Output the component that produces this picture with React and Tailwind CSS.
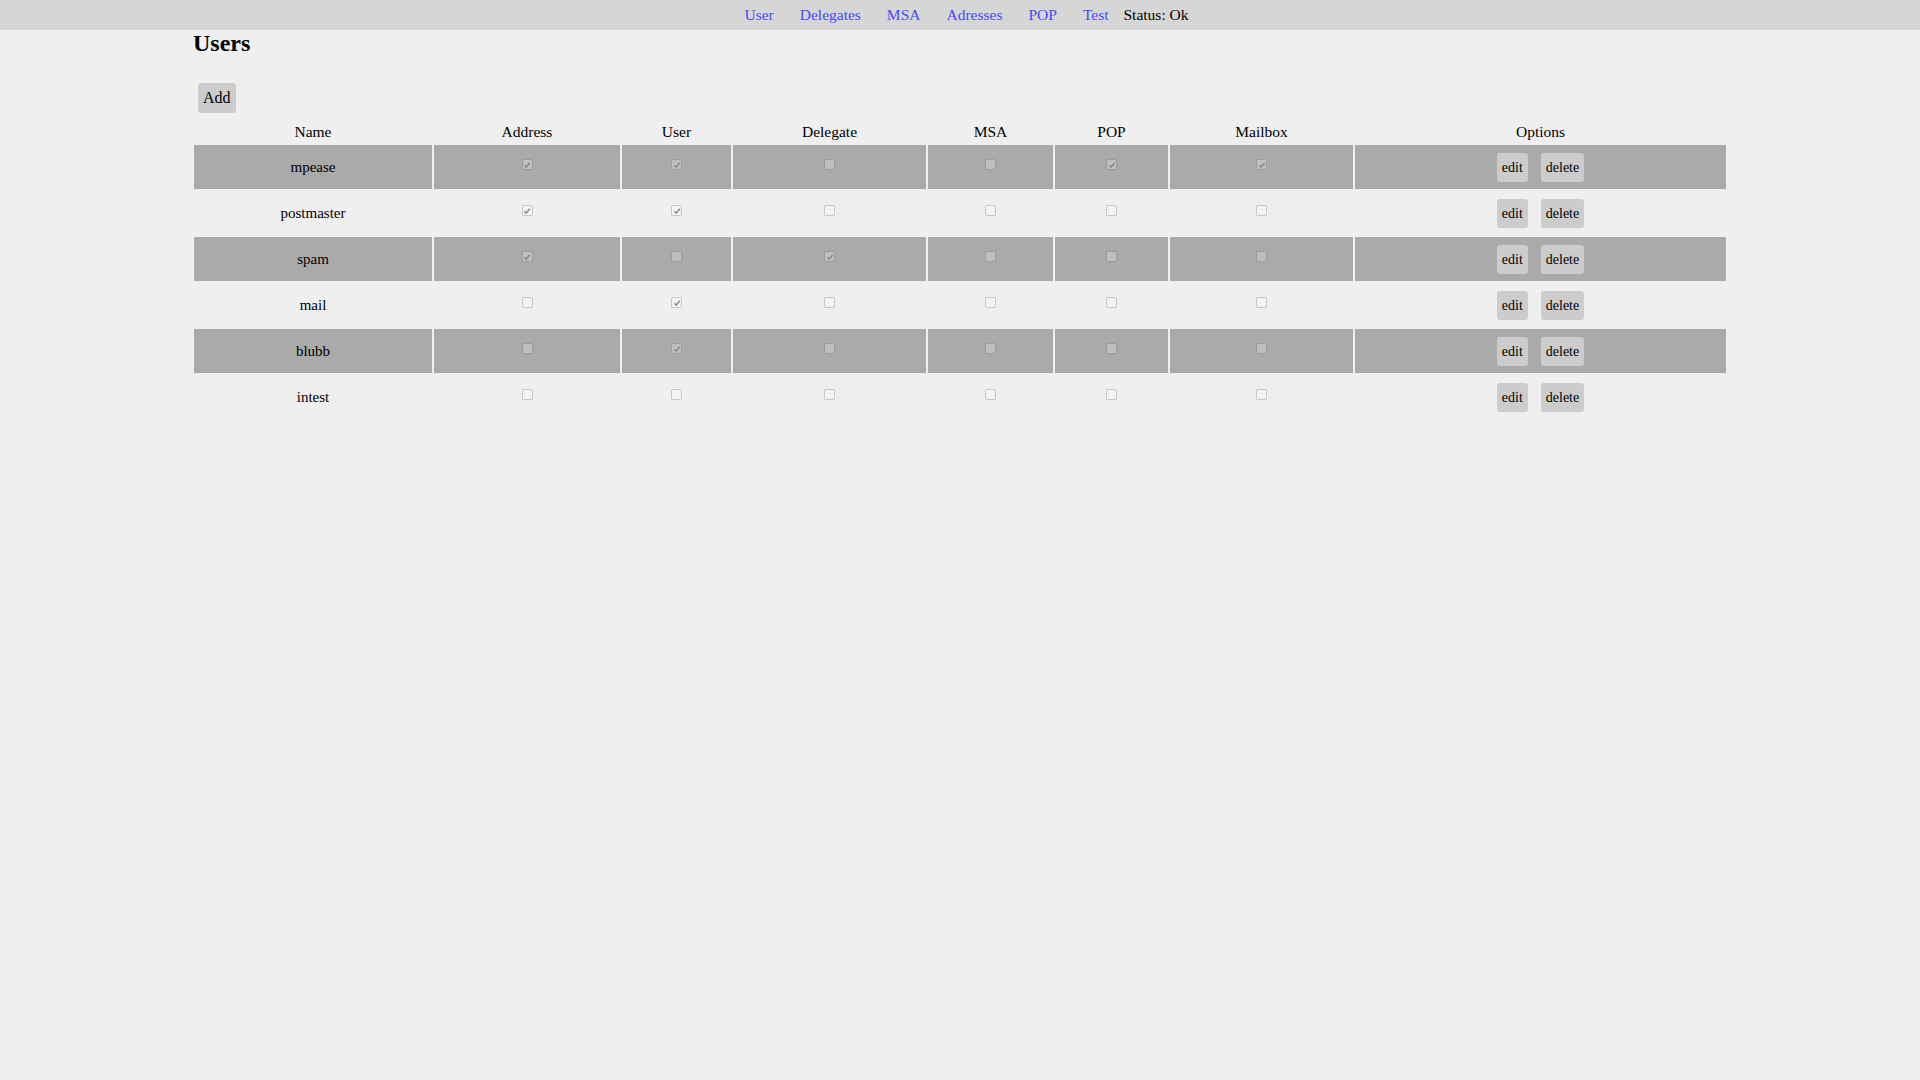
import React from "react";

const serif = "font-['Liberation_Serif','Times_New_Roman',serif]";

const links = ["User", "Delegates", "MSA", "Adresses", "POP", "Test"];

const cols = [
  { label: "Name", w: "w-[238px]" },
  { label: "Address", w: "w-[186px]" },
  { label: "User", w: "w-[109px]" },
  { label: "Delegate", w: "w-[193px]" },
  { label: "MSA", w: "w-[125px]" },
  { label: "POP", w: "w-[113px]" },
  { label: "Mailbox", w: "w-[183px]" },
  { label: "Options", w: "w-[371px]" },
];

const users = [
  { name: "mpease", flags: [1, 1, 0, 0, 1, 1] },
  { name: "postmaster", flags: [1, 1, 0, 0, 0, 0] },
  { name: "spam", flags: [1, 0, 1, 0, 0, 0] },
  { name: "mail", flags: [0, 1, 0, 0, 0, 0] },
  { name: "blubb", flags: [0, 1, 0, 0, 0, 0] },
  { name: "intest", flags: [0, 0, 0, 0, 0, 0] },
];

// disabled checkbox look
function Box({ on }) {
  return (
    <span className="mb-[5px] inline-flex h-[11px] w-[11px] items-center justify-center rounded-[2px] border border-[#0000002e] bg-[#ffffff40]">
      {on ? (
        <svg viewBox="0 0 10 10" className="h-[8px] w-[8px]">
          <path d="M1.8 5.4 L4 7.6 L8.4 2.2" stroke="#888888" strokeWidth="1.8" fill="none" />
        </svg>
      ) : null}
    </span>
  );
}

export default function App() {
  return (
    <div className={`min-h-screen bg-[#efefef] text-black ${serif}`}>
      {/* top nav */}
      <nav className="flex h-[30px] items-center justify-center bg-[#d6d6d6] text-[15.5px]">
        {links.map((l) => (
          <a key={l} href="#" className="px-[13px] text-[#4848ff]">
            {l}
          </a>
        ))}
        <span className="ml-[2px]">Status: Ok</span>
      </nav>

      <div className="mx-auto w-[80%]">
        <h1 className="ml-[1px] text-[24px] font-bold leading-[26px]">Users</h1>

        <button className="ml-[6px] mt-[27px] h-[30px] rounded-[3px] bg-[#cccccc] px-[5px] text-[16px]">
          Add
        </button>

        <table className="mt-[4px] w-full border-separate border-spacing-[2px]">
          <thead>
            <tr className="h-[24px]">
              {cols.map((c) => (
                <th key={c.label} className={`${c.w} pt-[1px] text-center text-[15.5px] font-normal`}>
                  {c.label}
                </th>
              ))}
            </tr>
          </thead>
          <tbody>
            {users.map((u, i) => {
              const bg = i % 2 === 0 ? "bg-[#aaaaaa]" : "";
              return (
                <tr key={u.name} className="h-[44px]">
                  <td className={`${bg} text-center text-[15px]`}>{u.name}</td>
                  {u.flags.map((f, j) => (
                    <td key={j} className={bg}>
                      <div className="flex items-center justify-center">
                        <Box on={f} />
                      </div>
                    </td>
                  ))}
                  <td className={bg}>
                    <div className="flex items-center justify-center gap-[13px] text-[14px]">
                      <button className="h-[29px] rounded-[3px] bg-[#cccccc] px-[5px]">edit</button>
                      <button className="h-[29px] rounded-[3px] bg-[#cccccc] px-[5px]">delete</button>
                    </div>
                  </td>
                </tr>
              );
            })}
          </tbody>
        </table>
      </div>
    </div>
  );
}
